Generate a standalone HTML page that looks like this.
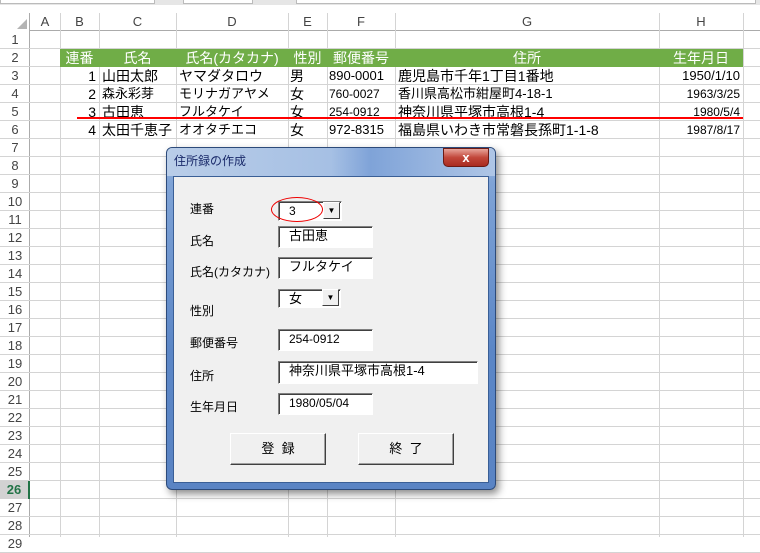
<!DOCTYPE html>
<html><head><meta charset="utf-8"><style>
*{margin:0;padding:0;box-sizing:border-box}
body{width:760px;height:537px;overflow:hidden;background:#fff;position:relative;font-family:"Liberation Sans","Noto Sans CJK JP",sans-serif;}
.a{position:absolute}
.hl{position:absolute;height:1px;background:#d4d4d4}
.vl{position:absolute;width:1px;background:#d4d4d4}
.ch{position:absolute;top:13px;height:18px;font-size:13px;color:#444;text-align:center;line-height:18px}
.rh{position:absolute;left:0;width:30px;height:18px;font-size:13px;color:#444;text-align:center;line-height:18px}
.c{position:absolute;height:18px;line-height:18px;font-size:14px;color:#000;white-space:nowrap;overflow:hidden}
.g{color:#fff;text-align:center;font-size:14px}
.r{text-align:right;padding-right:3px}
.lbl{position:absolute;font-size:12px;color:#000}
.tb{position:absolute;background:#fff;border:1px solid;border-color:#808080 #fff #fff #808080;box-shadow:inset 1px 1px 0 #404040;font-size:12px;padding-left:10px;line-height:18px}
.btn{position:absolute;background:#f0f0f0;border:1px solid;border-color:#fff #404040 #404040 #fff;box-shadow:inset -1px -1px 0 #a0a0a0;font-size:13px;text-align:center;line-height:29px}
.dd{position:absolute;width:17px;height:17px;background:#f0f0f0;border:1px solid;border-color:#fff #404040 #404040 #fff;font-size:8px;text-align:center;line-height:15px}
</style></head><body>
<div class="a" style="left:0;top:0;width:760px;height:5px;background:#e6e6e6"></div>
<div class="a" style="left:0;top:0;width:155px;height:4px;background:#fff;border:1px solid #bbb;border-top:none"></div>
<div class="a" style="left:183px;top:0;width:70px;height:4px;background:#fff;border:1px solid #bbb;border-top:none"></div>
<div class="a" style="left:296px;top:0;width:460px;height:4px;background:#fff;border:1px solid #bbb;border-top:none"></div>
<div class="a" style="left:0;top:5px;width:760px;height:26px;background:#fff"></div>
<div class="a" style="left:0;top:13px;width:760px;height:18px;background:#fff;border-bottom:1px solid #ababab"></div>
<div class="a" style="left:0;top:13px;width:30px;height:524px;background:#fff;border-right:1px solid #ababab"></div>
<div class="a" style="left:17px;top:19px;width:0;height:0;border-left:10px solid transparent;border-bottom:10px solid #b4b4b4"></div>
<div class="ch" style="left:30px;width:30px">A</div>
<div class="ch" style="left:60px;width:39px">B</div>
<div class="ch" style="left:99px;width:77px">C</div>
<div class="ch" style="left:176px;width:112px">D</div>
<div class="ch" style="left:288px;width:39px">E</div>
<div class="ch" style="left:327px;width:68px">F</div>
<div class="ch" style="left:395px;width:264px">G</div>
<div class="ch" style="left:659px;width:84px">H</div>
<div class="vl" style="left:60px;top:13px;height:524px"></div>
<div class="vl" style="left:99px;top:13px;height:524px"></div>
<div class="vl" style="left:176px;top:13px;height:524px"></div>
<div class="vl" style="left:288px;top:13px;height:524px"></div>
<div class="vl" style="left:327px;top:13px;height:524px"></div>
<div class="vl" style="left:395px;top:13px;height:524px"></div>
<div class="vl" style="left:659px;top:13px;height:524px"></div>
<div class="vl" style="left:743px;top:13px;height:524px"></div>
<div id="rows"></div>
<script>
var h='';for(var n=1;n<=29;n++){var t=31+18*(n-1);h+='<div class="hl" style="left:0;width:760px;top:'+(t+17)+'px"></div>';
h+='<div class="rh" style="top:'+t+'px;'+(n==26?'background:#d2d2d2;color:#217346;font-weight:bold;border-right:2px solid #217346':'')+'">'+n+'</div>';}
document.getElementById('rows').innerHTML=h;
</script>
<div class="a" style="left:60px;top:49px;width:683px;height:18px;background:#70ad47"></div>
<div class="c g" style="left:60px;top:49px;width:39px">連番</div>
<div class="c g" style="left:99px;top:49px;width:77px">氏名</div>
<div class="c g" style="left:176px;top:49px;width:112px">氏名(カタカナ)</div>
<div class="c g" style="left:288px;top:49px;width:39px">性別</div>
<div class="c g" style="left:327px;top:49px;width:68px">郵便番号</div>
<div class="c g" style="left:395px;top:49px;width:264px">住所</div>
<div class="c g" style="left:659px;top:49px;width:84px">生年月日</div>
<div class="c r" style="left:60px;top:67px;width:39px">1</div><div class="c" style="left:102px;top:67px">山田太郎</div><div class="c" style="left:179px;top:67px">ヤマダタロウ</div><div class="c" style="left:290px;top:67px">男</div><div class="c" style="left:329px;top:67px;font-size:13px">890-0001</div><div class="c" style="left:398px;top:67px">鹿児島市千年1丁目1番地</div><div class="c r" style="left:659px;top:67px;width:84px;font-size:13px">1950/1/10</div>
<div class="c r" style="left:60px;top:85px;width:39px">2</div><div class="c" style="left:102px;top:85px;font-size:13px">森永彩芽</div><div class="c" style="left:179px;top:85px;font-size:13px">モリナガアヤメ</div><div class="c" style="left:290px;top:85px">女</div><div class="c" style="left:329px;top:85px;font-size:12px">760-0027</div><div class="c" style="left:398px;top:85px;font-size:13px">香川県高松市紺屋町4-18-1</div><div class="c r" style="left:659px;top:85px;width:84px;font-size:12px">1963/3/25</div>
<div class="c r" style="left:60px;top:103px;width:39px">3</div><div class="c" style="left:102px;top:103px">古田恵</div><div class="c" style="left:179px;top:103px;font-size:13px">フルタケイ</div><div class="c" style="left:290px;top:103px">女</div><div class="c" style="left:329px;top:103px;font-size:12px">254-0912</div><div class="c" style="left:398px;top:103px">神奈川県平塚市高根1-4</div><div class="c r" style="left:659px;top:103px;width:84px;font-size:12px">1980/5/4</div>
<div class="c r" style="left:60px;top:121px;width:39px">4</div><div class="c" style="left:102px;top:121px">太田千恵子</div><div class="c" style="left:179px;top:121px;font-size:13px">オオタチエコ</div><div class="c" style="left:290px;top:121px">女</div><div class="c" style="left:329px;top:121px;font-size:13px">972-8315</div><div class="c" style="left:398px;top:121px">福島県いわき市常磐長孫町1-1-8</div><div class="c r" style="left:659px;top:121px;width:84px;font-size:12px">1987/8/17</div>
<div class="a" style="left:77px;top:117px;width:666px;height:2px;background:#f00"></div>
<div class="a" style="left:166px;top:147px;width:330px;height:343px;border-radius:6px;background:linear-gradient(180deg,#a9c3e3 0,#7fa3d6 10%,#5b86c6 60%,#5a84c4 100%);border:1px solid #2c4a7a;box-shadow:3px 4px 8px rgba(0,0,0,.45)"></div>
<div class="a" style="left:167px;top:148px;width:328px;height:28px;border-radius:5px 5px 0 0;background:linear-gradient(90deg,#b9cde8,#a6c0e4 50%,#7fa3d8 62%,#afc6e6)"></div>
<div class="a" style="left:174px;top:152px;font-size:12px;color:#1a2a6a">住所録の作成</div>
<div class="a" style="left:443px;top:148px;width:46px;height:19px;border-radius:0 0 5px 5px;background:linear-gradient(#e8a49a,#c2473a 50%,#a92b20);border:1px solid #6b1a14;color:#fff;font-weight:bold;font-size:13px;text-align:center;line-height:17px">x</div>
<div class="a" style="left:173px;top:176px;width:316px;height:307px;background:#f0f0f0;border:1px solid #3a5f96"></div>
<div class="lbl" style="left:190px;top:200px">連番</div>
<div class="lbl" style="left:190px;top:232px">氏名</div>
<div class="lbl" style="left:190px;top:263px">氏名(カタカナ)</div>
<div class="lbl" style="left:190px;top:302px">性別</div>
<div class="lbl" style="left:190px;top:334px">郵便番号</div>
<div class="lbl" style="left:190px;top:367px">住所</div>
<div class="lbl" style="left:190px;top:398px">生年月日</div>
<div class="tb" style="left:278px;top:201px;width:64px;height:20px">3</div><div class="dd" style="left:323px;top:202px">▼</div>
<div class="tb" style="left:278px;top:226px;width:95px;height:22px;font-size:13px">古田恵</div>
<div class="tb" style="left:278px;top:257px;width:95px;height:22px;font-size:13px">フルタケイ</div>
<div class="tb" style="left:278px;top:289px;width:63px;height:19px;font-size:13px">女</div><div class="dd" style="left:322px;top:289px">▼</div>
<div class="tb" style="left:278px;top:329px;width:95px;height:22px">254-0912</div>
<div class="tb" style="left:278px;top:361px;width:200px;height:23px;font-size:13px">神奈川県平塚市高根1-4</div>
<div class="tb" style="left:278px;top:393px;width:95px;height:22px">1980/05/04</div>
<div class="btn" style="left:230px;top:433px;width:96px;height:32px">登&nbsp;&nbsp;録</div>
<div class="btn" style="left:358px;top:433px;width:96px;height:32px">終&nbsp;&nbsp;了</div>
<div class="a" style="left:271px;top:197px;width:52px;height:25px;border:1.5px solid #e00;border-radius:50%"></div>
</body></html>
